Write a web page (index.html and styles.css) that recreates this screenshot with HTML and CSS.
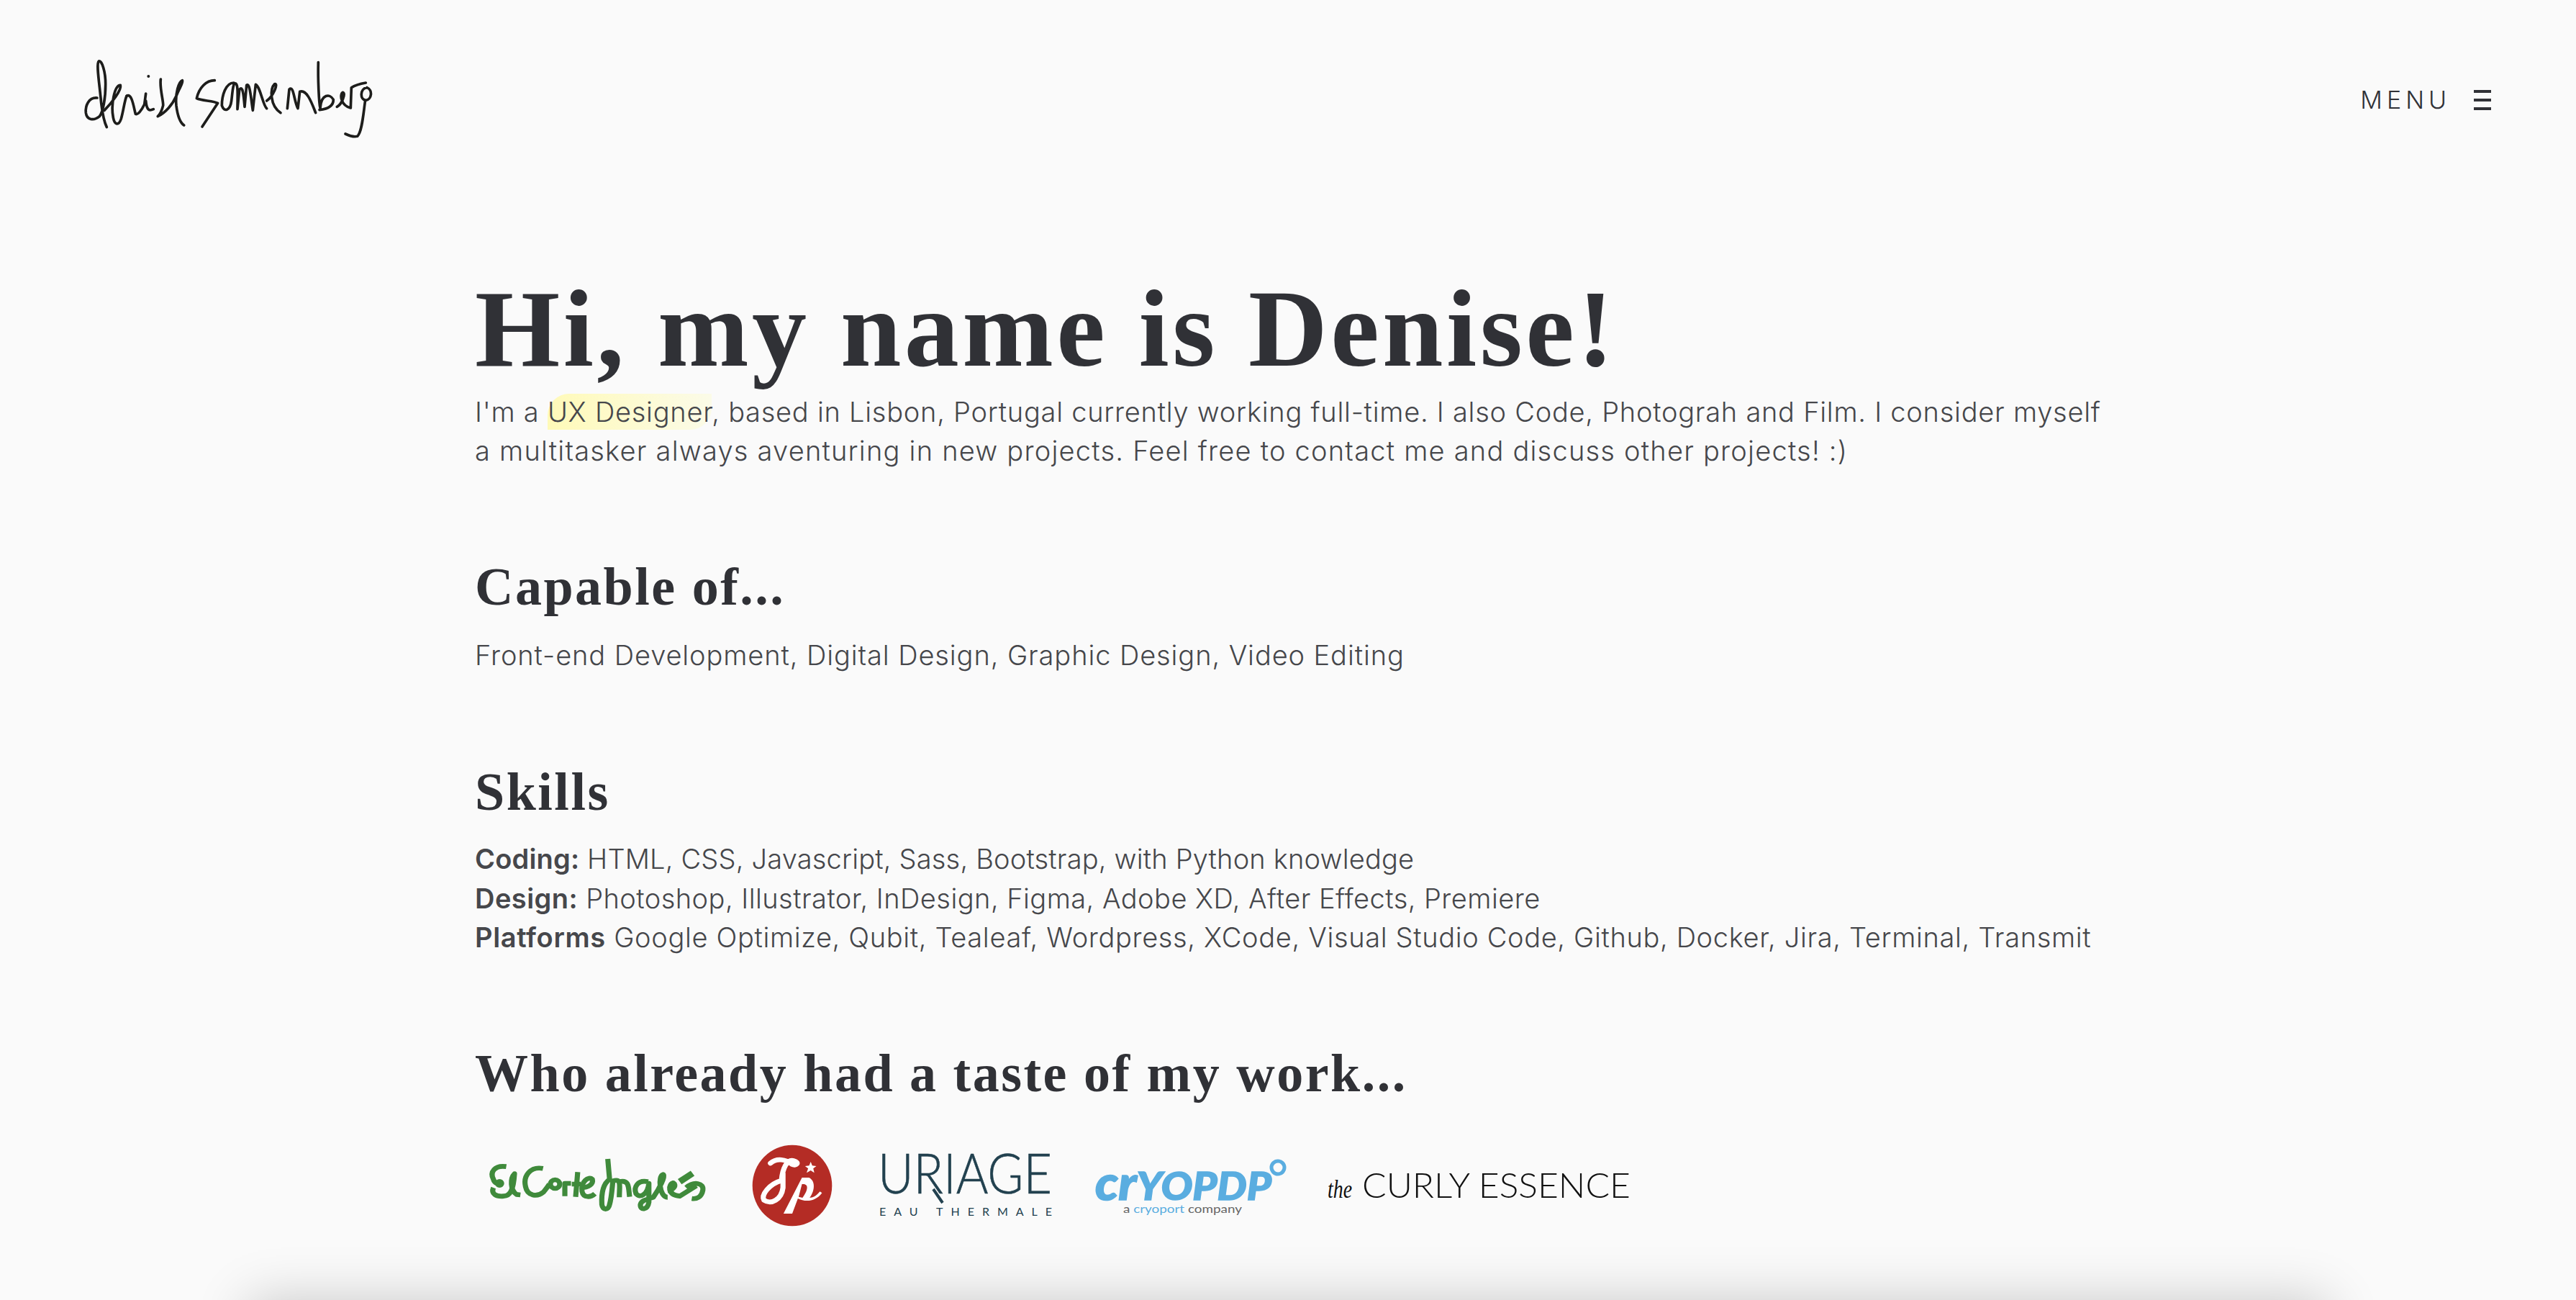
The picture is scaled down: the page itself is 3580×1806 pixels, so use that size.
FILE: index.html
```html
<!DOCTYPE html>
<html lang="en">
<head>
<meta charset="utf-8">
<title>Denise Sonnemberg</title>
<link rel="stylesheet" href="styles.css">
</head>
<body>
<header class="site-header">
  <a class="brand" aria-label="denise sonnemberg">
    <svg class="brand-mark" viewBox="0 0 1440 510" role="img" aria-label="denise sonnemberg signature">
      <g class="sign">
        <path d="M165 258C130 255 115 290 118 320C122 350 150 355 175 335C190 315 200 260 200 200C200 150 185 100 172 105C160 115 175 200 182 280C188 330 195 360 205 380"/>
        <path d="M195 310C225 280 268 225 262 205C236 205 222 290 232 340C238 372 255 375 265 345C275 310 280 265 288 250"/>
        <path d="M288 250C310 235 318 300 325 325C335 330 350 310 362 285L368 240M368 270C372 315 385 312 400 305"/>
        <path d="M430 180C425 220 442 270 440 290C435 310 425 328 418 335C450 320 480 285 495 250C505 225 525 190 520 185C505 190 490 240 495 290C500 330 510 360 527 372"/>
        <path d="M655 185C620 185 590 215 580 260C600 270 650 270 668 280L603 378"/>
        <path d="M735 195C700 195 685 250 685 290C695 320 720 310 725 270C730 230 730 205 738 198C755 192 750 250 750 305L758 225C772 200 776 250 780 295L788 205C802 192 806 260 814 310L826 202C846 212 856 290 872 302"/>
        <path d="M872 270C900 250 922 195 905 200C885 220 885 290 930 320"/>
        <path d="M958 302L966 222C985 205 985 270 1002 302L1010 232C1040 222 1060 280 1076 320"/>
        <path d="M1087 110C1085 180 1090 280 1095 300C1100 240 1135 240 1150 265C1150 295 1125 305 1092 308"/>
        <path d="M1165 295C1185 285 1202 240 1190 235C1175 240 1180 290 1222 300L1225 215C1240 205 1255 200 1285 195"/>
        <path d="M1290 215C1260 220 1260 265 1285 268C1310 265 1315 225 1290 215M1283 268C1275 320 1270 400 1250 418C1235 422 1215 415 1200 408"/>
      </g>
      <circle class="sign-dot" cx="379" cy="168" r="6"/>
    </svg>
  </a>
  <button class="menu" type="button">
    <span class="menu-label">MENU</span>
    <span class="menu-icon"><i></i><i></i><i></i></span>
  </button>
</header>

<main class="content">
  <section class="intro">
    <h1>Hi, my name is Denise!</h1>
    <p>I'm a <span class="mark">UX Designer</span>, based in Lisbon, Portugal currently working full-time. I also Code, Photograh and Film. I consider myself <span class="intro-rest">a multitasker always aventuring in new projects. Feel free to contact me and discuss other projects! :)</span></p>
  </section>
  <section class="capable">
    <h2>Capable of...</h2>
    <p>Front-end Development, Digital Design, Graphic Design, Video Editing</p>
  </section>
  <section class="skills">
    <h2>Skills</h2>
    <p class="skill skill-coding"><strong>Coding:</strong> HTML, CSS, Javascript, Sass, Bootstrap, with Python knowledge</p>
    <p class="skill skill-design"><strong>Design:</strong> Photoshop, Illustrator, InDesign, Figma, Adobe XD, After Effects, Premiere</p>
    <p class="skill skill-platforms"><strong>Platforms</strong> Google Optimize, Qubit, Tealeaf, Wordpress, XCode, Visual Studio Code, Github, Docker, Jira, Terminal, Transmit</p>
  </section>
  <section class="clients">
    <h2>Who already had a taste of my work...</h2>
    <div class="logos">
      <svg class="logo logo-eci" viewBox="84 60 854 345" preserveAspectRatio="none" role="img" aria-label="El Corte Inglés">
        <g class="eci">
          <path d="M150 152C105 145 85 175 100 205C105 225 125 225 128 225M100 240C90 265 110 278 140 275C165 275 178 250 182 182C165 200 165 250 190 268L205 270"/>
          <circle cx="124" cy="222" r="8"/>
          <path d="M293 160C245 150 215 190 225 235C232 275 270 280 295 258C305 245 312 235 318 225"/>
          <circle cx="340" cy="225" r="18"/>
          <path d="M378 275L378 222L402 222M428 175L420 278M405 225L440 225"/>
          <path d="M440 240C470 240 490 225 485 205C470 190 440 215 445 255C450 285 480 280 495 265"/>
          <path d="M545 120L552 205C525 225 520 270 522 310C525 335 548 335 552 310C560 280 562 240 565 212C600 200 590 230 590 280M590 215C630 205 625 240 630 278"/>
          <path d="M702 215C660 205 645 240 655 265C670 285 700 270 705 222L705 300C700 335 670 335 672 310C675 295 690 290 722 280C745 245 772 190 760 185C740 190 745 280 778 280"/>
          <path d="M778 252C800 250 815 230 800 220C780 225 775 270 825 275L890 232"/>
          <path d="M850 240C880 212 920 220 915 250C910 280 890 288 872 285"/>
          <path class="eci-accent" d="M825 215L875 180"/>
        </g>
      </svg>
      <svg class="logo logo-sp" viewBox="1103 60 314 345" preserveAspectRatio="none" role="img" aria-label="Sp">
        <ellipse class="sp-disc" cx="1260" cy="231" rx="155" ry="169"/>
        <path class="sp-script" d="M1175 138C1200 115 1235 122 1258 142C1275 152 1292 135 1265 127C1240 120 1222 160 1218 210C1170 225 1138 270 1150 292C1178 312 1218 290 1224 240L1224 180"/>
        <path class="sp-stem" d="M1226 348L1260 348L1282 285C1310 300 1350 300 1376 262L1368 256C1350 278 1340 282 1328 282C1350 250 1350 210 1325 198L1298 198ZM1298 225C1320 222 1328 240 1300 282L1285 278Z" fill-rule="evenodd"/>
        <polygon class="sp-star" points="1332,132 1338,148 1354,150 1342,160 1346,178 1332,168 1316,178 1322,160 1310,150 1326,148"/>
      </svg>
      <svg class="logo logo-uriage" viewBox="1216 1590 246 115" role="img" aria-label="Uriage Eau Thermale">
        <text class="uriage-main" x="1219" y="1658" textLength="242" lengthAdjust="spacingAndGlyphs">URIAGE</text>
        <path class="uriage-leg" d="M1296 1652L1309 1671"/>
        <text class="uriage-sub" x="1221" y="1689" textLength="240">EAU THERMALE</text>
      </svg>
      <svg class="logo logo-cryo" viewBox="1522 1590 262 115" role="img" aria-label="cryoPDP, a cryoport company">
        <text class="cryo-main" x="1521" y="1667" textLength="245" lengthAdjust="spacingAndGlyphs"><tspan class="cryo-low">cr</tspan>YOPDP</text>
        <circle class="cryo-ring" cx="1775" cy="1622" r="9"/>
        <text class="cryo-sub" x="1560" y="1685" textLength="165" lengthAdjust="spacingAndGlyphs">a <tspan class="cryo-blue">cryoport</tspan> company</text>
      </svg>
      <svg class="logo logo-curly" viewBox="1844 1590 426 115" role="img" aria-label="the Curly Essence">
        <text class="curly-the" x="1844" y="1664" textLength="34" lengthAdjust="spacingAndGlyphs">the</text>
        <text class="curly-name" x="1892" y="1664" textLength="373" lengthAdjust="spacingAndGlyphs">CURLY ESSENCE</text>
      </svg>
    </div>
  </section>
</main>
<div class="next-card"></div>
</body>
</html>
```
FILE: styles.css
```css
* { box-sizing: border-box; }
html, body { margin: 0; height: 1806px; overflow: hidden; }
body {
  background: #fafafa;
  color: #46474b;
  font-family: Inter, "Open Sans", sans-serif;
  font-weight: 300;
  font-size: 38px;
  line-height: 54.4px;
}
.site-header {
  display: flex;
  justify-content: space-between;
  align-items: center;
  height: 280px;
  padding: 0 118px 2px 80px;
}
.brand { display: block; height: 170px; align-self: flex-start; margin-top: 50px; }
.brand-mark { display: block; width: 480px; height: 170px; }
.sign { fill: none; stroke: #1d1d1b; stroke-width: 11; stroke-linecap: round; stroke-linejoin: round; }
.sign-dot { fill: #1d1d1b; }
.menu {
  display: flex;
  align-items: center;
  gap: 32px;
  padding: 0;
  border: 0;
  background: none;
  color: #303136;
  font: 300 34px/1 Inter, sans-serif;
}
.menu-label { letter-spacing: 6px; }
.menu-icon { display: flex; flex-direction: column; gap: 8px; width: 24px; }
.menu-icon i { display: block; height: 4px; background: #303136; }
.content { width: 2280px; margin-left: 660px; }
h1, h2 {
  margin: 0;
  color: #303136;
  font-family: "Liberation Serif", serif;
  font-weight: 700;
}
h1 { font-size: 152px; line-height: 160px; letter-spacing: 4.4px; padding-top: 97px; }
h2 { font-size: 74px; line-height: 90px; letter-spacing: 2.5px; }
p { margin: 0; }
.intro p { margin-top: 8px; letter-spacing: 0.74px; }
.intro-rest { letter-spacing: 1.22px; }
.capable { margin-top: 116px; }
.capable p { margin-top: 23px; letter-spacing: 0.9px; }
.skills { margin-top: 118px; }
.skill-coding { margin-top: 21px; letter-spacing: 0.18px; }
.skill-design { letter-spacing: 0.45px; }
.skill-platforms { letter-spacing: 0.64px; }
.skills strong { font-weight: 600; }
.clients { margin-top: 117px; }
.mark {
  padding: 2px 0;
  background: linear-gradient(90deg, #fffab8, #fbfbe8);
  border-radius: 30px 0 30px 0;
}
.logos {
  display: flex;
  gap: 60px;
  margin-top: 54px;
  padding-left: 20px;
}
.logo { display: block; height: 115px; flex: none; overflow: visible; }
.logo-eci { width: 305px; }
.logo-sp { width: 112px; }
.logo-uriage { width: 246px; }
.logo-cryo { width: 262px; }
.logo-curly { width: 426px; }
.eci { fill: none; stroke: #3f8a3b; stroke-width: 20; stroke-linecap: butt; stroke-linejoin: round; }
.eci-accent { stroke-width: 26; }
.sp-disc { fill: #b42c25; }
.sp-script { fill: none; stroke: #fff; stroke-width: 20; stroke-linecap: round; }
.sp-stem, .sp-star { fill: #fff; }
.uriage-main { font: 300 76px Lato, sans-serif; fill: #22414f; stroke: #22414f; stroke-width: 0.6; }
.uriage-leg { stroke: #22414f; stroke-width: 4; }
.uriage-sub { font: 400 16px Lato, sans-serif; fill: #22414f; }
.cryo-main { font: italic 900 54px Lato, sans-serif; fill: #5aade0; stroke: #5aade0; stroke-width: 1.5; }
.cryo-low { font-size: 66px; }
.cryo-ring { fill: none; stroke: #5aade0; stroke-width: 5; }
.cryo-sub { font: 400 15px Lato, sans-serif; fill: #666; }
.cryo-blue { fill: #5aade0; }
.curly-the { font: italic 400 36px "Liberation Serif", serif; fill: #111; }
.curly-name { font: 300 48px Lato, sans-serif; fill: #111; }
.next-card {
  position: absolute;
  left: 345px;
  top: 1806px;
  width: 2890px;
  height: 400px;
  background: #fafafa;
  box-shadow: 0 0 70px rgba(0, 0, 0, 0.2);
}
```
